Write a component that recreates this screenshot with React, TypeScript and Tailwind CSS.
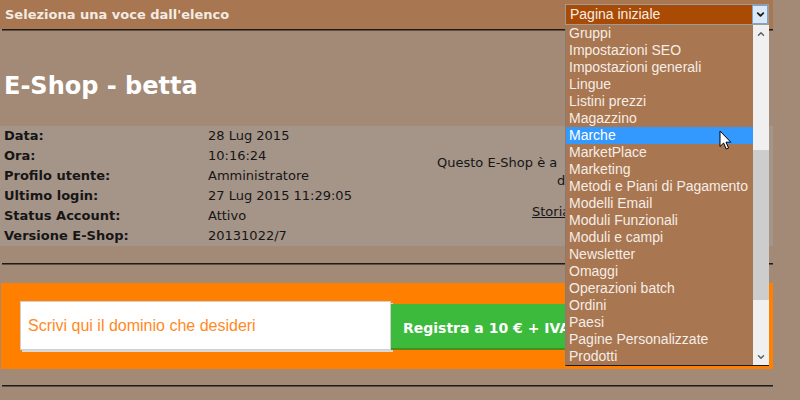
import { ChevronDown, ChevronUp } from 'lucide-react'

const menuItems = [
  'Gruppi',
  'Impostazioni SEO',
  'Impostazioni generali',
  'Lingue',
  'Listini prezzi',
  'Magazzino',
  'Marche',
  'MarketPlace',
  'Marketing',
  'Metodi e Piani di Pagamento',
  'Modelli Email',
  'Moduli Funzionali',
  'Moduli e campi',
  'Newsletter',
  'Omaggi',
  'Operazioni batch',
  'Ordini',
  'Paesi',
  'Pagine Personalizzate',
  'Prodotti',
]

const infoRows = [
  { label: 'Data:', value: '28 Lug 2015' },
  { label: 'Ora:', value: '10:16:24' },
  { label: 'Profilo utente:', value: 'Amministratore' },
  { label: 'Ultimo login:', value: '27 Lug 2015 11:29:05' },
  { label: 'Status Account:', value: 'Attivo' },
  { label: 'Versione E-Shop:', value: '20131022/7' },
]

function Rule() {
  return <div className="ml-[2px] h-[2px] bg-[#1f1b18] border-b border-[#5e4e43]" />
}

function SelectMenu() {
  return (
    <div className="absolute left-[565px] top-[4px] w-[204px] font-['Liberation_Sans',Arial,sans-serif] text-[14px]">
      {/* Closed select */}
      <div className="flex h-[21px] border border-[#9c9c9c] bg-[#a94a05]">
        <div className="flex-1 pl-[4px] leading-[19px] text-[#f7eee6]">Pagina iniziale</div>
        <div className="flex w-[16px] items-center justify-center border border-[#7fa3cf] bg-[#dbe8f6]">
          <ChevronDown className="h-[11px] w-[11px] text-[#1c1c1c]" strokeWidth={4} />
        </div>
      </div>

      {/* Open list */}
      <div className="flex border-l border-b border-l-[#8a7a70] border-b-[#1a1a1a] bg-[#a87650]">
        <div className="flex-1">
          {menuItems.map((item) =>
            item === 'Marche' ? (
              <div key={item} className="h-[17px] bg-[#3399ff] pl-[3px] leading-[17px] text-white">
                {item}
              </div>
            ) : (
              <div key={item} className="h-[17px] pl-[3px] leading-[17px] text-[#f6ede6]">
                {item}
              </div>
            )
          )}
        </div>

        {/* Scrollbar */}
        <div className="flex w-[16px] flex-col bg-[#f0f0f0]">
          <div className="flex h-[17px] items-center justify-center">
            <ChevronUp className="h-[10px] w-[10px] text-[#606060]" strokeWidth={3.5} />
          </div>
          <div className="mt-[108px] h-[150px] bg-[#cdcdcd]" />
          <div className="flex-1" />
          <div className="flex h-[17px] items-center justify-center">
            <ChevronDown className="h-[10px] w-[10px] text-[#606060]" strokeWidth={3.5} />
          </div>
        </div>
      </div>
    </div>
  )
}

export default function App() {
  return (
    <div className="relative h-[400px] w-[800px] overflow-hidden bg-[#a38a77] font-['DejaVu_Sans',Verdana,sans-serif]">
      <div className="w-[773px]">
        {/* Header */}
        <div className="flex h-[29px] items-center bg-[#a87650] pl-[5px] text-[13px] font-bold text-[#f3ebe3]">
          Seleziona una voce dall'elenco
        </div>
        <Rule />

        {/* Title */}
        <div className="h-[95px] pt-[41px] pl-[4px]">
          <h1 className="text-[24px] font-bold leading-[29px] text-white">E-Shop - betta</h1>
        </div>

        {/* Info panel */}
        <div className="flex h-[120px] bg-[#a59488] text-[13px] text-[#161616]">
          <div className="w-[430px] pl-[4px]">
            {infoRows.map((row) => (
              <div key={row.label} className="flex h-[20px] items-center">
                <div className="w-[204px] font-bold">{row.label}</div>
                <div>{row.value}</div>
              </div>
            ))}
          </div>
          {/* right column, cut off by the open select */}
          <div className="flex-1 pt-[28px] pl-[7px] leading-[18px]">
            <div>Questo E-Shop è a</div>
            <div className="pl-[120px]">d</div>
            <div className="mt-[13px] pl-[95px]">
              <span className="underline">Storia</span>
            </div>
          </div>
        </div>

        <div className="h-[17px]" />
        <Rule />

        {/* Domain search */}
        <div className="mt-[18px] ml-[1px] flex h-[86px] items-end bg-[#ff7f00] pl-[19px] pb-[19px]">
          <input
            className="h-[49px] w-[371px] border border-[#cfcfcf] bg-white px-[7px] font-['Liberation_Sans',Arial,sans-serif] text-[16px] shadow-[2px_2px_0_#d9d9d9] outline-none placeholder:text-[#ff8a1f]"
            placeholder="Scrivi qui il dominio che desideri"
          />
          <button className="h-[46px] w-[230px] border-b-2 border-[#4f8c1c] bg-[#3bba3b] pt-[4px] pl-[12px] text-left text-[14px] font-bold text-white">
            Registra a 10 € + IVA
          </button>
          <div className="ml-auto mr-[35px] flex items-end gap-[6px]">
            <div className="h-[14px] w-[20px] rounded-full bg-[#f3e7dc]" />
            <div className="h-[14px] w-[20px] rounded-full bg-[#f3e7dc]" />
            <div className="h-[14px] w-[20px] rounded-full bg-[#e8584a]" />
          </div>
        </div>

        <div className="h-[16px]" />
        <Rule />
      </div>

      <SelectMenu />

      {/* Mouse pointer */}
      <svg className="absolute left-[719px] top-[130px]" width="14" height="21" viewBox="0 0 14 21">
        <path d="M1 1 L1 16.5 L4.6 13 L7.2 19 L9.6 18 L7 12.2 L11.8 12.2 Z" fill="white" stroke="black" strokeWidth="1" strokeLinejoin="round" />
      </svg>
    </div>
  )
}
